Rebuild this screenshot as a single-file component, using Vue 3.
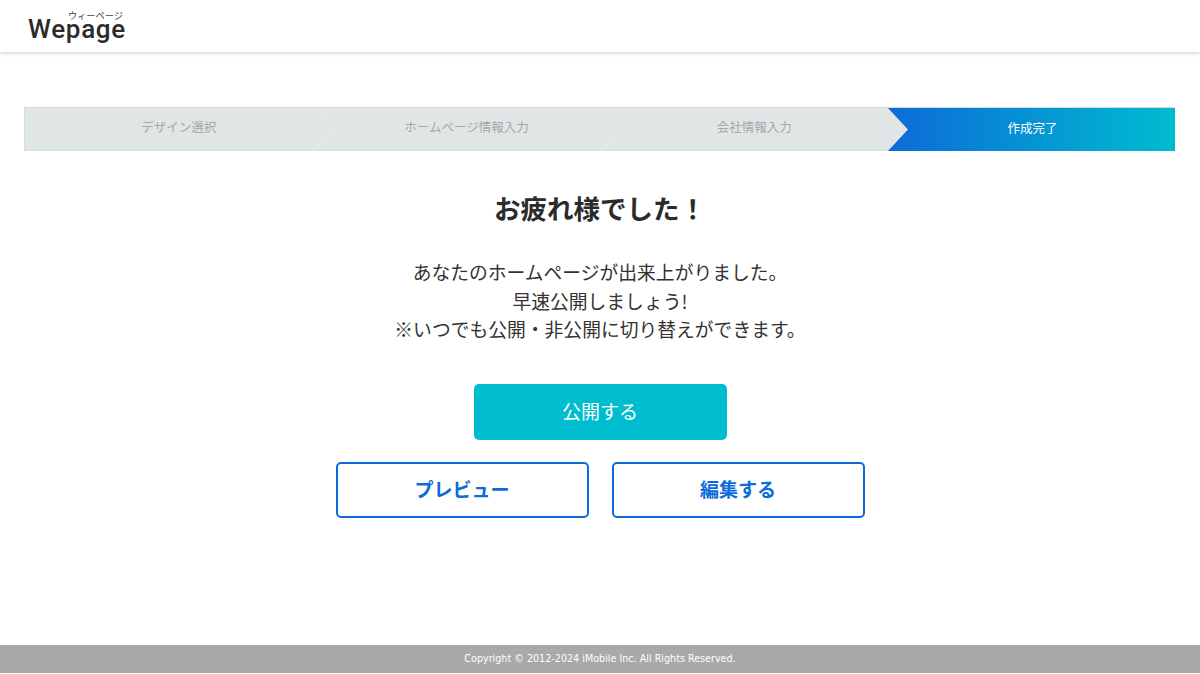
<template>
  <div class="page">
    <header class="header">
      <div class="logo">
        <span class="logo-kana">ウィーページ</span>
        <span class="logo-name">Wepage</span>
      </div>
    </header>

    <main class="main">
      <ol class="steps">
        <li v-for="(step, index) in steps" :key="step" class="step" :class="{ active: index === steps.length - 1 }">
          <span class="step-label">{{ step }}</span>
          <svg v-if="index < steps.length - 2" class="step-arrow" viewBox="0 0 20 44" aria-hidden="true">
            <path d="M0 0L20 22L0 44" />
          </svg>
        </li>
      </ol>

      <h1 class="title">お疲れ様でした！</h1>
      <p class="message">
        あなたのホームページが出来上がりました。<br />
        早速公開しましょう!<br />
        ※いつでも公開・非公開に切り替えができます。
      </p>

      <button class="btn btn-primary" type="button">公開する</button>
      <div class="sub-actions">
        <button class="btn btn-outline" type="button">プレビュー</button>
        <button class="btn btn-outline" type="button">編集する</button>
      </div>
    </main>

    <footer class="footer">Copyright © 2012-2024 iMobile Inc. All Rights Reserved.</footer>
  </div>
</template>

<script setup>
const steps = ['デザイン選択', 'ホームページ情報入力', '会社情報入力', '作成完了'];
</script>

<style>
html,
body {
  margin: 0;
  background: #fff;
}
</style>

<style scoped>
.page {
  display: flex;
  flex-direction: column;
  height: 674px;
  overflow: hidden;
  font-family: "Noto Sans CJK JP", "DejaVu Sans", sans-serif;
  color: #333;
}

.header {
  flex: none;
  height: 52px;
  padding-left: 28px;
  background: #fff;
  box-shadow: 0 1px 4px rgba(0, 0, 0, 0.2);
}

.logo {
  display: inline-flex;
  flex-direction: column;
  align-items: flex-end;
  padding-top: 8px;
}

.logo-kana {
  height: 8px;
  margin-right: 3px;
  font-size: 9.2px;
  line-height: 8px;
  color: #444;
}

.logo-name {
  font-family: Roboto, sans-serif;
  font-size: 26px;
  font-weight: 500;
  line-height: 20px;
  letter-spacing: 0.7px;
  color: #2b2b2b;
}

.main {
  flex: 1;
  display: flex;
  flex-direction: column;
  align-items: center;
  padding: 55px 25px 0;
}

.steps {
  display: grid;
  grid-template-columns: repeat(3, 287.67px) 1fr;
  align-self: stretch;
  height: 44px;
  margin: 0 0 0 -1px;
  padding: 0;
  list-style: none;
  box-sizing: border-box;
  background: #e0e6e6;
  border: 1px solid #d6dcdd;
}

.step {
  position: relative;
  display: flex;
  align-items: center;
  justify-content: center;
  padding: 0 0 5px 20px;
  font-size: 12.5px;
  color: #a3a8a9;
}

.step-arrow {
  position: absolute;
  top: -1px;
  right: -20px;
  z-index: 1;
  width: 20px;
  height: 44px;
}

.step-arrow path {
  fill: none;
  stroke: #e9eeee;
  stroke-width: 1;
}

.step.active {
  margin: 0 -1px -1px 0;
  padding-left: 2px;
  color: #fff;
  background: linear-gradient(90deg, #0b6bd8, #00bccf);
}

.step.active::before {
  content: "";
  position: absolute;
  top: 0;
  bottom: 0;
  left: 0;
  width: 20px;
  background: #e0e6e6;
  clip-path: polygon(0 0, 100% 50%, 0 100%);
}

.title {
  margin: 38px 0 0;
  font-size: 26.5px;
  font-weight: 700;
  line-height: 38px;
  color: #2b2b2b;
}

.message {
  margin: 31px 0 0;
  font-size: 18.8px;
  line-height: 28.5px;
  text-align: center;
  color: #333;
}

.btn {
  box-sizing: border-box;
  width: 253px;
  height: 56px;
  padding: 0 0 2px;
  font-family: inherit;
  font-size: 19px;
  border-radius: 5px;
}

.btn-primary {
  margin-top: 40px;
  color: #fff;
  background: #00bccf;
  border: 0;
}

.sub-actions {
  display: flex;
  gap: 23px;
  margin-top: 22px;
}

.btn-outline {
  font-weight: 700;
  color: #0b6bd8;
  background: #fff;
  border: 2px solid #0b6bd8;
}

.footer {
  flex: none;
  height: 28px;
  margin-bottom: 1px;
  font-family: "DejaVu Sans", sans-serif;
  font-size: 9.6px;
  line-height: 28px;
  text-align: center;
  color: #fff;
  background: #a9a9a9;
}
</style>
